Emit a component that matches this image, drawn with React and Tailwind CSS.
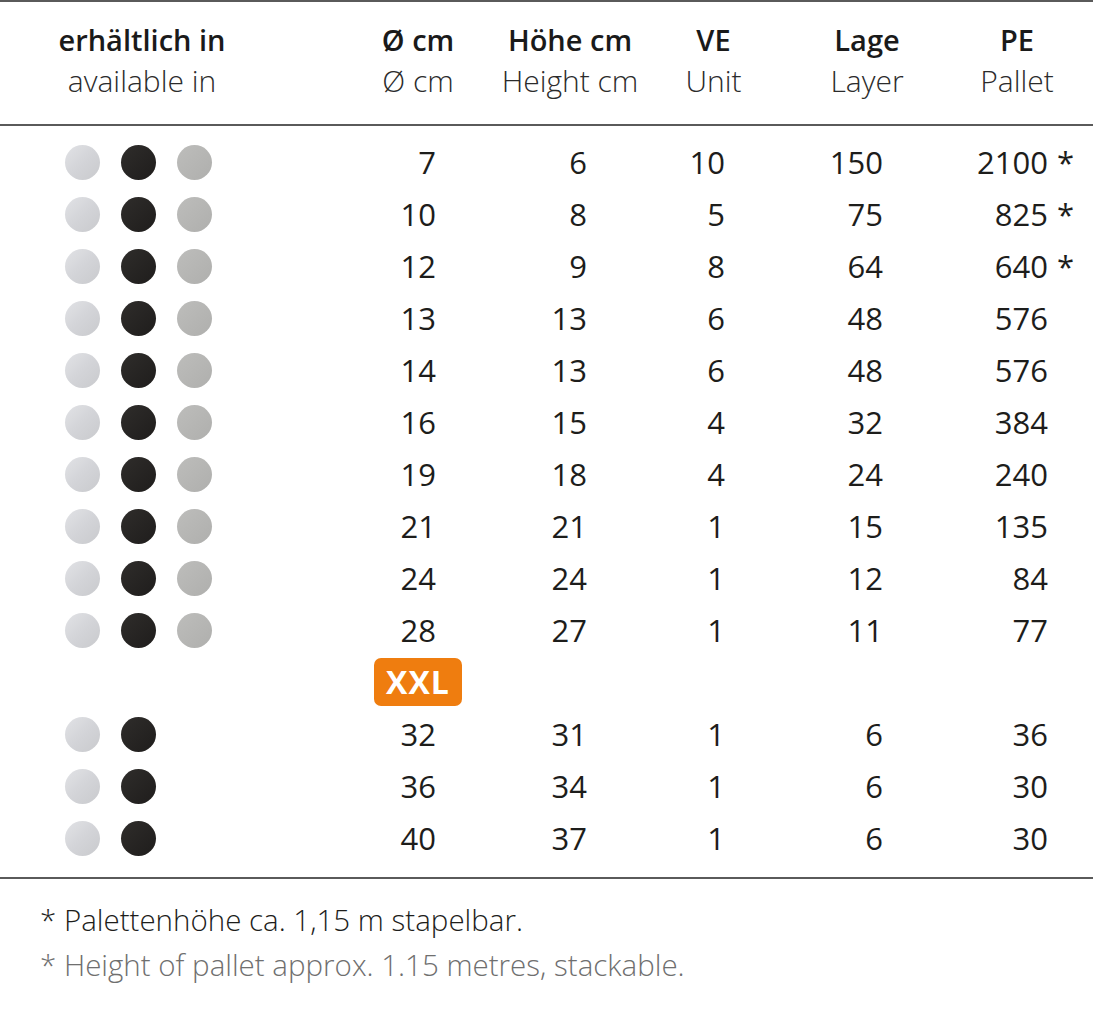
import React from "react";

const rows = [
  { d: "7", h: "6", ve: "10", lage: "150", pe: "2100", star: true, dots: 3 },
  { d: "10", h: "8", ve: "5", lage: "75", pe: "825", star: true, dots: 3 },
  { d: "12", h: "9", ve: "8", lage: "64", pe: "640", star: true, dots: 3 },
  { d: "13", h: "13", ve: "6", lage: "48", pe: "576", dots: 3 },
  { d: "14", h: "13", ve: "6", lage: "48", pe: "576", dots: 3 },
  { d: "16", h: "15", ve: "4", lage: "32", pe: "384", dots: 3 },
  { d: "19", h: "18", ve: "4", lage: "24", pe: "240", dots: 3 },
  { d: "21", h: "21", ve: "1", lage: "15", pe: "135", dots: 3 },
  { d: "24", h: "24", ve: "1", lage: "12", pe: "84", dots: 3 },
  { d: "28", h: "27", ve: "1", lage: "11", pe: "77", dots: 3 },
];

const xxlRows = [
  { d: "32", h: "31", ve: "1", lage: "6", pe: "36", dots: 2 },
  { d: "36", h: "34", ve: "1", lage: "6", pe: "30", dots: 2 },
  { d: "40", h: "37", ve: "1", lage: "6", pe: "30", dots: 2 },
];

function Dots({ count }) {
  return (
    <div className="flex items-center gap-[21px] pl-[65px]">
      <span className="block w-[35px] h-[35px] rounded-full bg-linear-to-br from-[#e2e3e6] via-[#d3d4d8] to-[#c9cacd]" />
      <span className="block w-[35px] h-[35px] rounded-full bg-linear-to-br from-[#2f2d2b] to-[#1f1d1c]" />
      {count > 2 && (
        <span className="block w-[35px] h-[35px] rounded-full bg-linear-to-br from-[#bdbdbb] to-[#afafad]" />
      )}
    </div>
  );
}

function Row({ r }) {
  return (
    <div className="flex h-[52px] items-center leading-[52px] text-[31px] text-[#1d1d1b]">
      <div className="w-[360px]">
        <Dots count={r.dots} />
      </div>
      <div className="w-[116px] text-right pr-[40px]">{r.d}</div>
      <div className="w-[188px] text-right pr-[77px]">{r.h}</div>
      <div className="w-[99px] text-right pr-[38px]">{r.ve}</div>
      <div className="w-[208px] text-right pr-[88px]">{r.lage}</div>
      <div className="w-[92px] text-right pr-[15px]">{r.pe}</div>
      <div className="w-[30px] -ml-[6px]">{r.star ? "*" : ""}</div>
    </div>
  );
}

function HeadCell({ top, bottom, w }) {
  return (
    <div className={`${w} text-center`}>
      <div className="font-semibold text-[29px] text-[#1a1a1a]">{top}</div>
      <div className="font-light text-[30px] text-[#2b2b2b]">{bottom}</div>
    </div>
  );
}

export default function App() {
  return (
    <div className="min-h-[1012px] w-[1093px] bg-white font-['Open_Sans',sans-serif]">
      <div className="border-t-2 border-[#5a5a5a]" />
      <div className="flex pt-[17px] pb-[23px] leading-[41px] border-b-2 border-[#5a5a5a]">
        <div className="w-[360px]">
          <HeadCell w="w-[284px]" top="erhältlich in" bottom="available in" />
        </div>
        <HeadCell w="w-[116px]" top="Ø cm" bottom="Ø cm" />
        <HeadCell w="w-[188px]" top="Höhe cm" bottom="Height cm" />
        <HeadCell w="w-[99px]" top="VE" bottom="Unit" />
        <HeadCell w="w-[208px]" top="Lage" bottom="Layer" />
        <HeadCell w="w-[92px]" top="PE" bottom="Pallet" />
      </div>

      <div className="pt-[10px] pb-[13px] border-b-2 border-[#5a5a5a]">
        {rows.map((r) => (
          <Row key={r.d} r={r} />
        ))}
        <div className="flex h-[52px] items-center">
          <div className="w-[360px]" />
          <div className="w-[116px] flex justify-center">
            <span className="flex items-center justify-center w-[88px] h-[48px] rounded-[7px] bg-[#ef7d0f] text-white font-bold text-[32px] leading-none tracking-[1px]">
              XXL
            </span>
          </div>
        </div>
        {xxlRows.map((r) => (
          <Row key={r.d} r={r} />
        ))}
      </div>

      <div className="pt-[18px] pl-[40px] text-[29.5px] leading-[45px] font-light">
        <p className="text-[#1d1d1b]">* Palettenhöhe ca. 1,15 m stapelbar.</p>
        <p className="text-[#6f6f6f]">* Height of pallet approx. 1.15 metres, stackable.</p>
      </div>
    </div>
  );
}
